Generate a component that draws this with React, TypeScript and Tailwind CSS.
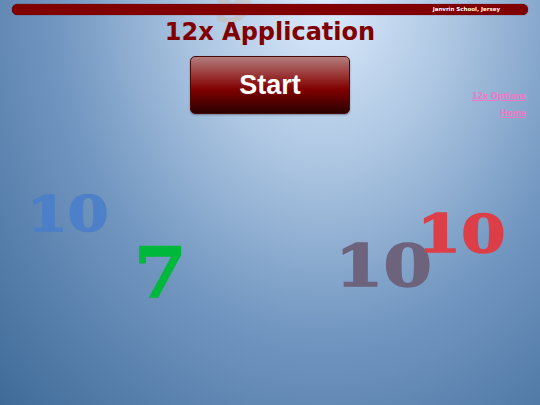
import React from 'react';

const floaters = [
  { text: '9', cls: 'left-[212px] top-[-30px] text-[60px] text-[#d99a62] opacity-20' },
  { text: '10', cls: 'left-[27px] top-[190px] text-[48px] text-[#4a7fca] opacity-90 scale-x-[1.22] origin-left' },
  { text: '7', cls: 'left-[134px] top-[238px] text-[70px] text-[#00b83c] scale-x-[1.08] origin-left' },
  { text: '10', cls: 'left-[335px] top-[237px] text-[58px] text-[#6d6079] opacity-95 scale-x-[1.2] origin-left' },
  { text: '10', cls: 'left-[417px] top-[207px] text-[53px] text-[#e23a42] opacity-95 scale-x-[1.2] origin-left' },
];

export default function App() {
  return (
    <div className="relative w-full h-[405px] overflow-hidden bg-[radial-gradient(ellipse_at_60%_0%,#dcebfd_0%,#adc6e2_28%,#7297c1_58%,#3f6a98_100%)]">
      {floaters.map((f, i) => (
        <div
          key={i}
          className={`absolute leading-none font-bold font-['DejaVu_Serif',serif] [-webkit-text-stroke:1.5px_currentColor] select-none ${f.cls}`}
        >
          {f.text}
        </div>
      ))}

      <div className="relative flex flex-col">
        <div className="mx-[12px] mt-[4px] h-[11px] rounded-full bg-[#800000] shadow-[0_0_1px_#400] flex items-center justify-end pr-[28px]">
          <span className="text-white text-[5.5px] font-bold font-['DejaVu_Sans',sans-serif] leading-none">
            Janvrin School, Jersey
          </span>
        </div>

        <h1 className="mt-[5px] text-center text-[24px] leading-none font-bold text-[#800000] font-['DejaVu_Sans',sans-serif]">
          12x Application
        </h1>

        <div className="mt-[12px] grid grid-cols-[1fr_160px_1fr]">
          <div />
          <button className="h-[58px] w-[160px] rounded-[5px] border border-[#4a0a0a] bg-[linear-gradient(to_bottom,#b27d7d_0%,#982f2f_35%,#800000_58%,#2b0000_100%)] shadow-[0_1px_2px_rgba(0,0,0,0.35)] text-white text-[27px] font-bold font-['Liberation_Sans',sans-serif]">
            Start
          </button>
          <div className="flex flex-col items-end pt-[37px] pr-[14px] gap-[9px] font-['DejaVu_Sans',sans-serif] text-[8px] font-bold leading-none text-[#ef78c6]">
            <a href="#" className="underline">12x Options</a>
            <a href="#" className="underline">Home</a>
          </div>
        </div>
      </div>
    </div>
  );
}
